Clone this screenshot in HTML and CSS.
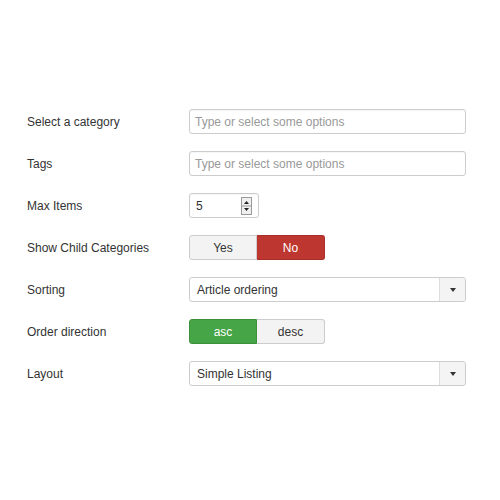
FILE: index.html
```html
<!DOCTYPE html>
<html>
<head>
<meta charset="utf-8">
<link rel="stylesheet" href="styles.css">
</head>
<body>
<form class="form">
  <div class="row">
    <label class="label">Select a category</label>
    <div class="field wide"><span class="placeholder">Type or select some options</span></div>
  </div>
  <div class="row">
    <label class="label">Tags</label>
    <div class="field wide"><span class="placeholder">Type or select some options</span></div>
  </div>
  <div class="row">
    <label class="label">Max Items</label>
    <div class="field number">
      <span class="value">5</span>
      <span class="spin">
        <svg width="11" height="18" viewBox="0 0 11 18">
          <rect x="0.5" y="0.5" width="10" height="17" fill="#f0f0f0" stroke="#999"/>
          <line x1="0.5" y1="9" x2="10.5" y2="9" stroke="#999"/>
          <path d="M3 7 L5.5 4 L8 7 Z" fill="#222"/>
          <path d="M3 11 L5.5 14 L8 11 Z" fill="#222"/>
        </svg>
      </span>
    </div>
  </div>
  <div class="row">
    <label class="label">Show Child Categories</label>
    <div class="toggle">
      <span class="btn">Yes</span>
      <span class="btn danger">No</span>
    </div>
  </div>
  <div class="row">
    <label class="label">Sorting</label>
    <div class="select">
      <span class="select-text">Article ordering</span>
      <span class="select-btn"><span class="caret"></span></span>
    </div>
  </div>
  <div class="row">
    <label class="label">Order direction</label>
    <div class="toggle">
      <span class="btn success">asc</span>
      <span class="btn">desc</span>
    </div>
  </div>
  <div class="row">
    <label class="label">Layout</label>
    <div class="select">
      <span class="select-text">Simple Listing</span>
      <span class="select-btn"><span class="caret"></span></span>
    </div>
  </div>
</form>
</body>
</html>
```

FILE: styles.css
```css
html, body {
  margin: 0;
  padding: 0;
  background: #fff;
}
body {
  font-family: "Liberation Sans", Arial, sans-serif;
  font-size: 12px;
  color: #333;
  width: 500px;
  height: 500px;
}
.form {
  display: flex;
  flex-direction: column;
  gap: 17px;
  padding: 109px 0 0 27px;
}
.row {
  display: flex;
  align-items: center;
  height: 25px;
}
.label {
  width: 162px;
  flex: none;
  color: #333;
}
.field {
  box-sizing: border-box;
  height: 25px;
  border: 1px solid #ccc;
  border-radius: 3px;
  background: #fff;
  display: flex;
  align-items: center;
  padding-left: 5px;
  box-shadow: inset 0 1px 1px rgba(0,0,0,0.04);
}
.wide {
  width: 277px;
}
.placeholder {
  color: #999;
}
.number {
  width: 70px;
  justify-content: space-between;
  padding-right: 6px;
  padding-left: 6px;
}
.value {
  color: #333;
}
.spin {
  display: flex;
}
.toggle {
  display: flex;
  height: 25px;
}
.btn {
  box-sizing: border-box;
  width: 68px;
  height: 25px;
  display: flex;
  align-items: center;
  justify-content: center;
  border: 1px solid #ccc;
  background: #f3f3f3;
  color: #333;
  font-size: 12px;
}
.btn:first-child {
  border-radius: 3px 0 0 3px;
}
.btn:last-child {
  border-radius: 0 3px 3px 0;
  border-left: none;
}
.btn.danger {
  background: #bd362f;
  border-color: #a8302a;
  color: #fff;
}
.btn.success {
  background: #46a546;
  border-color: #3b913b;
  color: #fff;
}
.select {
  box-sizing: border-box;
  width: 277px;
  height: 25px;
  border: 1px solid #ccc;
  border-radius: 3px;
  display: flex;
  align-items: stretch;
  background: #fff;
}
.select-text {
  flex: 1;
  display: flex;
  align-items: center;
  padding-left: 7px;
  color: #333;
}
.select-btn {
  width: 25px;
  border-left: 1px solid #ddd;
  background: #f4f4f4;
  display: flex;
  align-items: center;
  justify-content: center;
  border-radius: 0 3px 3px 0;
}
.caret {
  width: 0;
  height: 0;
  border-left: 3px solid transparent;
  border-right: 3px solid transparent;
  border-top: 4px solid #333;
}
```
